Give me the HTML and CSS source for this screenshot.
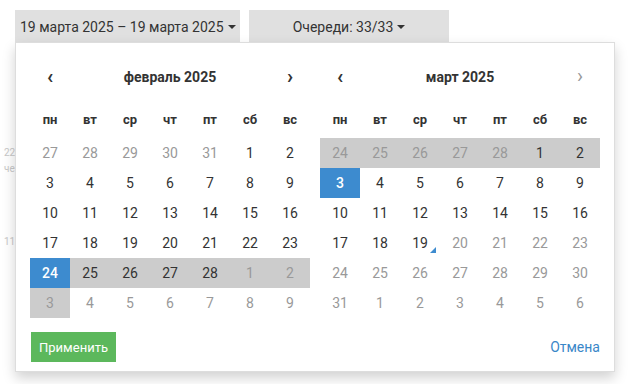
FILE: index.html
```html
<!DOCTYPE html>
<html lang="ru">
<head>
    <meta charset="UTF-8">
    <title>Выбор периода</title>
    <link rel="stylesheet" href="styles.css">
</head>
<body>

<!-- панель фильтров -->
<div class="toolbar">
    <button class="filter-btn range-btn">19 марта 2025 – 19 марта 2025<span class="caret"></span></button>
    <button class="filter-btn queue-btn">Очереди: 33/33<span class="caret"></span></button>
</div>

<!-- содержимое страницы под выпадающим окном -->
<div class="history">
    <div class="history-item">
        <div class="history-date">22</div>
        <div class="history-day">че</div>
    </div>
    <div class="history-item">
        <div class="history-date">11</div>
    </div>
</div>

<!-- выбор диапазона дат -->
<div class="picker">
    <div class="calendars">
        <div class="calendar">
            <div class="cal-head">
                <span class="nav">‹</span>
                <span class="month">февраль 2025</span>
                <span class="nav">›</span>
            </div>
            <div class="weekdays">
                <span>пн</span><span>вт</span><span>ср</span><span>чт</span><span>пт</span><span>сб</span><span>вс</span>
            </div>
            <div class="days">
                <span class="off">27</span><span class="off">28</span><span class="off">29</span><span class="off">30</span><span class="off">31</span><span>1</span><span>2</span>
                <span>3</span><span>4</span><span>5</span><span>6</span><span>7</span><span>8</span><span>9</span>
                <span>10</span><span>11</span><span>12</span><span>13</span><span>14</span><span>15</span><span>16</span>
                <span>17</span><span>18</span><span>19</span><span>20</span><span>21</span><span>22</span><span>23</span>
                <span class="active">24</span><span class="in-range">25</span><span class="in-range">26</span><span class="in-range">27</span><span class="in-range">28</span><span class="in-range off">1</span><span class="in-range off">2</span>
                <span class="in-range off">3</span><span class="off">4</span><span class="off">5</span><span class="off">6</span><span class="off">7</span><span class="off">8</span><span class="off">9</span>
            </div>
        </div>

        <div class="calendar">
            <div class="cal-head">
                <span class="nav">‹</span>
                <span class="month">март 2025</span>
                <span class="nav disabled">›</span>
            </div>
            <div class="weekdays">
                <span>пн</span><span>вт</span><span>ср</span><span>чт</span><span>пт</span><span>сб</span><span>вс</span>
            </div>
            <div class="days">
                <span class="in-range off">24</span><span class="in-range off">25</span><span class="in-range off">26</span><span class="in-range off">27</span><span class="in-range off">28</span><span class="in-range">1</span><span class="in-range">2</span>
                <span class="active">3</span><span>4</span><span>5</span><span>6</span><span>7</span><span>8</span><span>9</span>
                <span>10</span><span>11</span><span>12</span><span>13</span><span>14</span><span>15</span><span>16</span>
                <span>17</span><span>18</span><span class="today">19</span><span class="off">20</span><span class="off">21</span><span class="off">22</span><span class="off">23</span>
                <span class="off">24</span><span class="off">25</span><span class="off">26</span><span class="off">27</span><span class="off">28</span><span class="off">29</span><span class="off">30</span>
                <span class="off">31</span><span class="off">1</span><span class="off">2</span><span class="off">3</span><span class="off">4</span><span class="off">5</span><span class="off">6</span>
            </div>
        </div>
    </div>

    <div class="picker-footer">
        <button class="apply-btn">Применить</button>
        <a class="cancel-link" href="#">Отмена</a>
    </div>
</div>

</body>
</html>
```

FILE: styles.css
```css
body {
    font-family: Roboto, "Liberation Sans", sans-serif;
    background-color: #ffffff;
    color: #333333;
    margin: 0;
    padding: 0;
}

.toolbar {
    display: flex;
    gap: 9px;
    padding: 10px 0 0 15px;
}

.filter-btn {
    display: flex;
    align-items: center;
    height: 33px;
    background-color: #e0e0e0;
    color: #333333;
    border: none;
    font-family: inherit;
    font-size: 14px;
    white-space: nowrap;
    padding: 0;
    cursor: pointer;
}

.range-btn {
    width: 225px;
    padding-left: 5px;
}

.queue-btn {
    width: 200px;
    justify-content: center;
}

.caret {
    display: inline-block;
    margin-left: 4px;
    border-top: 4px solid #333333;
    border-left: 4px solid transparent;
    border-right: 4px solid transparent;
}

.history {
    width: 11px;
    padding: 104px 0 0 4px;
    font-size: 10px;
    color: #c8c8c8;
}

.history-item {
    margin-bottom: 62px;
}

.history-day {
    margin-top: 5px;
}

.picker {
    position: absolute;
    top: 42px;
    left: 15px;
    width: 570px;
    background-color: #ffffff;
    border: 1px solid #dddddd;
    padding: 19px 14px 9px;
    box-shadow: 0 6px 12px rgba(0,0,0,0.18);
}

.calendars {
    display: flex;
    gap: 10px;
}

.cal-head,
.weekdays,
.days {
    display: grid;
    grid-template-columns: repeat(7, 40px);
    text-align: center;
}

.cal-head {
    height: 30px;
    align-items: center;
    font-size: 14px;
    font-weight: bold;
}

.nav {
    font-size: 20px;
    line-height: 20px;
    margin-top: -2px;
}

.nav.disabled {
    color: #999999;
    font-weight: normal;
}

.month {
    grid-column: span 5;
}

.weekdays {
    margin-top: 12px;
    height: 30px;
    align-items: center;
    font-size: 13px;
    font-weight: bold;
}

.days {
    margin-top: 4px;
    grid-auto-rows: 30px;
    font-size: 14px;
}

.days span {
    position: relative;
    display: flex;
    align-items: center;
    justify-content: center;
}

.days .off {
    color: #999999;
}

.days .in-range {
    background-color: #cccccc;
}

.days .active {
    background-color: #3d8bcf;
    color: #ffffff;
    font-weight: 500;
}

.days .today::after {
    content: "";
    position: absolute;
    right: 4px;
    bottom: 5px;
    border-bottom: 6px solid #3d8bcf;
    border-left: 6px solid transparent;
}

.picker-footer {
    display: flex;
    justify-content: space-between;
    align-items: center;
    margin-top: 14px;
    padding-left: 1px;
}

.apply-btn {
    width: 85px;
    height: 30px;
    background-color: #5cb85c;
    color: #ffffff;
    border: none;
    font-family: inherit;
    font-size: 13px;
    cursor: pointer;
}

.cancel-link {
    color: #3a87c8;
    font-size: 14px;
    text-decoration: none;
}
```
